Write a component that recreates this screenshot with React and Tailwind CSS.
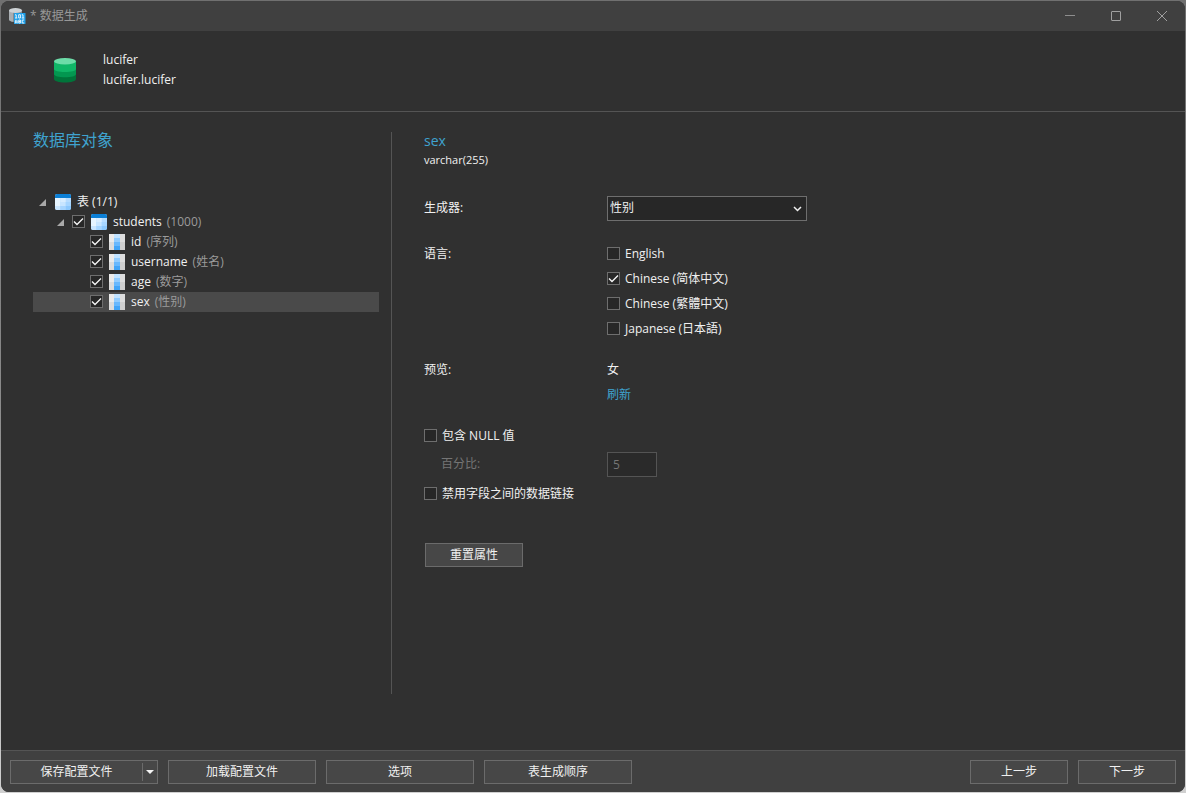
import { useState } from "react";

const DatabaseBadgeIcon = () => (
  <svg width="17" height="17" viewBox="0 0 17 17" aria-hidden="true">
    <path d="M0 2.500v9C0 13 2.800 14 6.500 14S13 13 13 11.500v-9z" fill="#858b90" />
    <path d="M0 2.500v9c0 1 1.500 1.900 4 2.300V3.500z" fill="#a9aeb2" />
    <ellipse cx="6.500" cy="2.500" rx="6.500" ry="2.400" fill="#cdd2d5" />
    <rect x="5" y="5" width="11.500" height="11" rx="0.500" fill="#1e9fe8" />
    <path
      d="M6 6.800h1.200V10M6 10h2.300M9.700 6.700h1.700V10H9.700zM12.800 6.800H14V10M12.800 10h2.400M6.300 15.300v-2.500l.9-.9.9.9v2.500M6.300 14h1.800M9.800 12v3h1.600v-3zM9.800 13.500h1.600M15.200 12h-2v3h2"
      fill="none"
      stroke="#e4f5ff"
      strokeWidth="1"
    />
  </svg>
);

const GreenDatabaseIcon = () => (
  <svg width="22" height="25" viewBox="0 0 22 25" aria-hidden="true">
    <path d="M0 16v5c0 2 4.900 3.500 11 3.500S22 23 22 21v-5z" fill="#00743a" />
    <path d="M0 10v6c0 2 4.900 3.300 11 3.300S22 18 22 16v-6z" fill="#039750" />
    <path d="M0 3v8c0 2 4.900 3 11 3s11-1 11-3V3z" fill="#10b667" />
    <ellipse cx="11" cy="3.200" rx="11" ry="3.200" fill="#6ddca8" />
  </svg>
);

const TableIcon = () => (
  <svg className="shrink-0" width="16" height="16" viewBox="0 0 16 16" aria-hidden="true">
    <rect width="16" height="16" rx="2" fill="#b6dcff" />
    <path d="M0 4h5.300v4H0zM0 8h5.300v4H0z" fill="#e6f4ff" />
    <path d="M5.300 4h5.400v4H5.300z" fill="#d8edff" />
    <path d="M0 12h5.300v4H2a2 2 0 0 1-2-2zM5.300 8h5.400v4H5.300z" fill="#c8e5ff" />
    <path d="M10.700 8H16v4h-5.300zM5.300 12h5.400v4H5.300z" fill="#a6d5ff" />
    <path d="M10.700 12H16v2a2 2 0 0 1-2 2h-3.300z" fill="#8cc8fd" />
    <path d="M0 4V2a2 2 0 0 1 2-2h12a2 2 0 0 1 2 2v2z" fill="#0b7fd6" />
  </svg>
);

const ColumnIcon = () => (
  <svg className="shrink-0" width="16" height="16" viewBox="0 0 16 16" aria-hidden="true">
    <path d="M0 0h16v16H0z" fill="#dcdcdc" />
    <path d="M0 0h5v4H0zM0 4h5v4H0z" fill="#ebebeb" />
    <path d="M11 8h5v8h-5z" fill="#cecece" />
    <path d="M5 0h6v4H5z" fill="#c2e3ff" />
    <path d="M5 4h6v4H5z" fill="#93cdff" />
    <path d="M5 8h6v4H5z" fill="#68b8fd" />
    <path d="M5 12h6v4H5z" fill="#42a5f8" />
  </svg>
);

const Expander = ({ className }) => (
  <button type="button" aria-label="展开" className={className}>
    <svg width="7" height="7" viewBox="0 0 7 7" aria-hidden="true">
      <path d="M7 0v7H0z" fill="#a9a9a9" />
    </svg>
  </button>
);

function CheckBox({ id, label, defaultChecked = false }) {
  const [checked, setChecked] = useState(defaultChecked);
  return (
    <span className="grid size-[13px] shrink-0 place-items-center">
      <input
        id={id}
        type="checkbox"
        aria-label={label}
        checked={checked}
        onChange={(e) => setChecked(e.target.checked)}
        className="col-start-1 row-start-1 size-[13px] appearance-none border border-[#6e6e6e] bg-[#272727]"
      />
      {checked && (
        <svg
          className="pointer-events-none col-start-1 row-start-1"
          width="11"
          height="11"
          viewBox="0 0 11 11"
          aria-hidden="true"
        >
          <path d="M1 5.500 4 8.500 10 2.500" fill="none" stroke="#f4f4f4" strokeWidth="1.400" />
        </svg>
      )}
    </span>
  );
}

const columns = [
  { name: "id", kind: "序列" },
  { name: "username", kind: "姓名" },
  { name: "age", kind: "数字" },
  { name: "sex", kind: "性别", selected: true },
];

const languages = [
  { id: "lang-en", label: "English" },
  { id: "lang-zh-cn", label: "Chinese (简体中文)", checked: true },
  { id: "lang-zh-tw", label: "Chinese (繁體中文)" },
  { id: "lang-ja", label: "Japanese (日本語)" },
];

const NodeLabel = ({ name, note }) => (
  <span className="flex gap-[5px]">
    <span>{name}</span>
    <span className="text-[#9b9b9b]">({note})</span>
  </span>
);

const buttonStyle = "h-6 border border-[#6b6b6b] bg-[#474747] text-center";

function TitleBar() {
  return (
    <header className="flex h-[30px] items-center bg-[#404040] pl-2 text-[#989898]">
      <DatabaseBadgeIcon />
      <h1 className="ml-1 flex-1">* 数据生成</h1>
      <div className="flex">
        <button type="button" aria-label="最小化" className="grid h-[30px] w-[46px] place-items-center">
          <svg width="10" height="10" viewBox="0 0 10 10" aria-hidden="true">
            <path d="M0 4.500h10" stroke="#8e8e8e" />
          </svg>
        </button>
        <button type="button" aria-label="最大化" className="grid h-[30px] w-[46px] place-items-center">
          <svg width="10" height="10" viewBox="0 0 10 10" aria-hidden="true">
            <rect x="0.500" y="0.500" width="9" height="9" rx="0.500" fill="none" stroke="#a0a0a0" />
          </svg>
        </button>
        <button type="button" aria-label="关闭" className="grid h-[30px] w-[46px] place-items-center">
          <svg width="10" height="10" viewBox="0 0 10 10" aria-hidden="true">
            <path d="m0 0 10 10M10 0 0 10" stroke="#a0a0a0" />
          </svg>
        </button>
      </div>
    </header>
  );
}

function ObjectTree() {
  return (
    <section className="w-[391px] shrink-0 border-r border-[#545454] pl-8 pr-3">
      <h2 className="text-[16px] leading-4 text-[#3fa3cf]">数据库对象</h2>
      <ul className="mt-11 leading-5">
        <li>
          <div className="flex h-5 items-center pl-[6px]">
            <Expander className="mr-[9px]" />
            <TableIcon />
            <span className="ml-[6px]">表 (1/1)</span>
          </div>
          <ul>
            <li>
              <div className="flex h-5 items-center pl-6">
                <Expander className="mr-2" />
                <span className="pb-px">
                  <CheckBox label="students" defaultChecked />
                </span>
                <span className="mx-[6px]">
                  <TableIcon />
                </span>
                <NodeLabel name="students" note="1000" />
              </div>
              <ul>
                {columns.map((c) => (
                  <li
                    key={c.name}
                    className={`flex h-5 items-center pl-[57px] ${c.selected ? "bg-[#4a4a4a]" : ""}`}
                  >
                    <span className="pb-px">
                      <CheckBox label={c.name} defaultChecked />
                    </span>
                    <span className="mx-[6px]">
                      <ColumnIcon />
                    </span>
                    <NodeLabel name={c.name} note={c.kind} />
                  </li>
                ))}
              </ul>
            </li>
          </ul>
        </li>
      </ul>
    </section>
  );
}

function FieldSettings() {
  return (
    <form className="min-w-0 flex-1 px-8" onSubmit={(e) => e.preventDefault()}>
      <h2 className="text-[14px] leading-[18px] text-[#3fa3cf]">sex</h2>
      <p className="text-[11px] leading-5">varchar(255)</p>

      <div className="mt-[26px] grid grid-cols-[183px_1fr] items-start">
        <label htmlFor="generator" className="leading-[23px]">
          生成器:
        </label>
        <div className="grid w-[200px] items-center">
          <select
            id="generator"
            className="col-start-1 row-start-1 h-[25px] appearance-none border border-[#6e6e6e] bg-[#272727] pb-px pl-[2px]"
          >
            <option>性别</option>
          </select>
          <svg
            className="pointer-events-none col-start-1 row-start-1 mr-[5px] justify-self-end"
            width="9"
            height="6"
            viewBox="0 0 9 6"
            aria-hidden="true"
          >
            <path d="m1 1 3.500 3.500L8 1" fill="none" stroke="#f0f0f0" strokeWidth="1.500" />
          </svg>
        </div>
      </div>

      <fieldset className="mt-5 grid grid-cols-[183px_1fr] leading-[25px]" aria-labelledby="language-label">
        <span id="language-label">语言:</span>
        <div>
          {languages.map((l) => (
            <div key={l.id} className="flex h-[25px] items-center gap-[5px]">
              <CheckBox id={l.id} defaultChecked={l.checked} />
              <label htmlFor={l.id}>{l.label}</label>
            </div>
          ))}
        </div>
      </fieldset>

      <div className="mt-4 grid grid-cols-[183px_1fr] leading-[25px]">
        <span>预览:</span>
        <div>
          <output className="block">女</output>
          <a href="#refresh" className="block w-fit text-[#3fa3cf]">
            刷新
          </a>
        </div>
      </div>

      <div className="mt-4 flex h-[25px] items-center gap-[5px]">
        <CheckBox id="include-null" />
        <label htmlFor="include-null">包含 NULL 值</label>
      </div>
      <div className="mt-1 grid grid-cols-[183px_1fr] items-start text-[#757575]">
        <label htmlFor="percentage" className="pl-[17px] leading-[23px]">
          百分比:
        </label>
        <input
          id="percentage"
          type="text"
          defaultValue="5"
          disabled
          className="h-[25px] w-[50px] border border-[#545454] bg-[#2a2a2a] px-[5px]"
        />
      </div>
      <div className="mt-1 flex h-[25px] items-center gap-[5px]">
        <CheckBox id="disable-links" />
        <label htmlFor="disable-links">禁用字段之间的数据链接</label>
      </div>

      <div className="mt-[37px] pl-px">
        <button type="button" className={`${buttonStyle} w-[98px]`}>
          重置属性
        </button>
      </div>
    </form>
  );
}

function Footer() {
  return (
    <footer className="flex items-start gap-[10px] border-t border-[#545454] bg-[#404040] px-[9px] pb-2 pt-[9px]">
      <div className={`${buttonStyle} flex w-[148px] items-center`}>
        <button type="button" className="flex-1">
          保存配置文件
        </button>
        <button
          type="button"
          aria-label="更多保存选项"
          className="grid h-[18px] w-[15px] place-items-center border-l border-[#6b6b6b]"
        >
          <svg width="8" height="4" viewBox="0 0 8 4" aria-hidden="true">
            <path d="M0 0h8L4 4z" fill="#f4f4f4" />
          </svg>
        </button>
      </div>
      <button type="button" className={`${buttonStyle} w-[148px]`}>
        加载配置文件
      </button>
      <button type="button" className={`${buttonStyle} w-[148px]`}>
        选项
      </button>
      <button type="button" className={`${buttonStyle} w-[148px]`}>
        表生成顺序
      </button>
      <button type="button" className={`${buttonStyle} ml-auto w-[98px]`}>
        上一步
      </button>
      <button type="button" className={`${buttonStyle} w-[98px]`}>
        下一步
      </button>
    </footer>
  );
}

export default function App() {
  return (
    <div className="flex min-h-screen flex-col bg-linear-to-b from-[#707070] from-1% via-[#8a8a8a] via-50% to-[#d0d0d0] p-px font-['Open_Sans','Noto_Sans_CJK_SC',sans-serif] text-[12px] leading-[18px] text-[#f0f0f0]">
      <div className="flex flex-1 flex-col overflow-hidden rounded-lg bg-[#303030]">
        <TitleBar />
        <div className="flex h-[81px] items-center border-b border-[#545454] pb-[2px] pl-[53px]">
          <GreenDatabaseIcon />
          <div className="ml-[27px] leading-5">
            <p>lucifer</p>
            <p>lucifer.lucifer</p>
          </div>
        </div>
        <main className="flex flex-1 pb-14 pt-5">
          <ObjectTree />
          <FieldSettings />
        </main>
        <Footer />
      </div>
    </div>
  );
}
